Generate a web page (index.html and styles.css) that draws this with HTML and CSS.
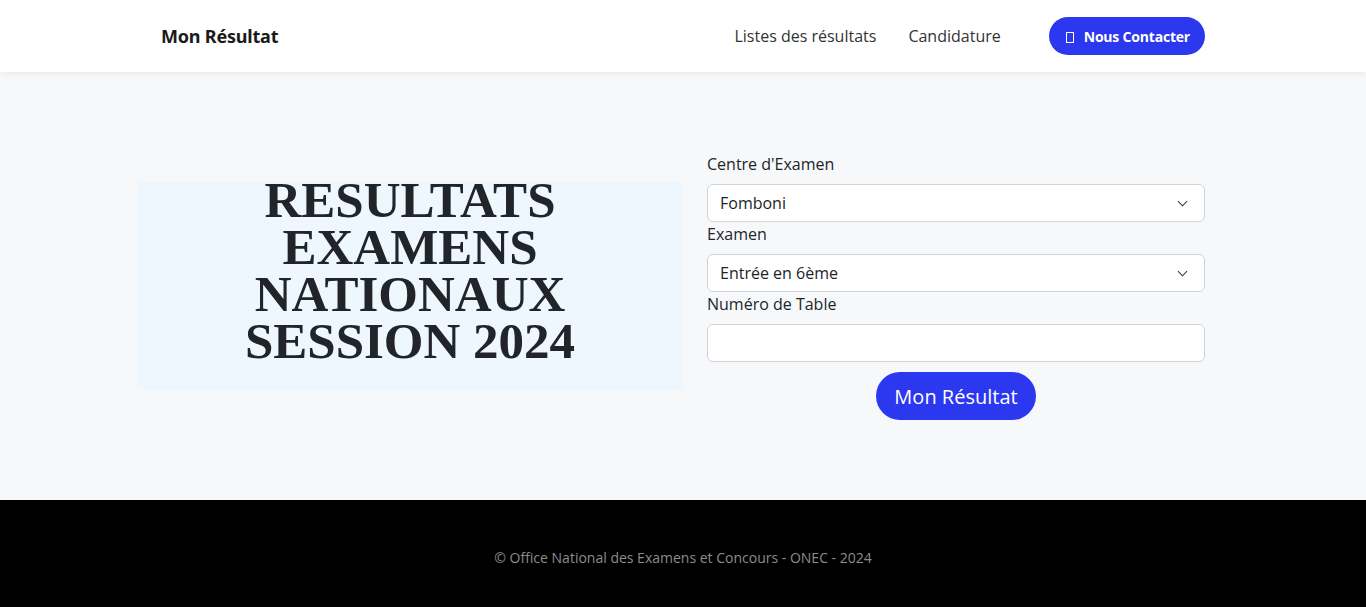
FILE: index.html
```html
<!DOCTYPE html>
<html lang="fr">
<head>
  <meta charset="UTF-8" />
  <meta name="viewport" content="width=device-width, initial-scale=1.0"/>
  <title>Mon Résultat - ONEC</title>
  <link rel="stylesheet" href="styles.css">
</head>
<body>
  <header class="navbar">
    <div class="nav-inner">
      <a href="#" class="brand">Mon Résultat</a>
      <nav class="nav-links">
        <a href="#">Listes des résultats</a>
        <a href="#">Candidature</a>
        <a href="#" class="btn-contact"><span class="tofu"></span>Nous Contacter</a>
      </nav>
    </div>
  </header>

  <main class="hero">
    <div class="row">
      <div class="titre">
        <h1>RESULTATS EXAMENS NATIONAUX SESSION 2024</h1>
      </div>

      <form class="formulaire">
        <label for="centre">Centre d'Examen</label>
        <div class="select-wrap">
          <select id="centre">
            <option>Fomboni</option>
          </select>
        </div>

        <label for="examen">Examen</label>
        <div class="select-wrap">
          <select id="examen">
            <option>Entrée en 6ème</option>
          </select>
        </div>

        <label for="numero">Numéro de Table</label>
        <input type="text" id="numero" />

        <div class="actions">
          <button type="button">Mon Résultat</button>
        </div>
      </form>
    </div>
  </main>

  <footer class="footer">
    <p>© Office National des Examens et Concours - ONEC - 2024</p>
  </footer>
</body>
</html>
```

FILE: styles.css
```css
* {
  box-sizing: border-box;
}

body {
  margin: 0;
  font-family: "Open Sans", Lato, sans-serif;
  color: #212529;
  background-color: #f7f8fa;
}

a {
  text-decoration: none;
}

.navbar {
  background-color: #fff;
  height: 72px;
  box-shadow: 0 2px 6px rgba(0, 0, 0, 0.06);
  position: relative;
}

.nav-inner {
  width: 1092px;
  margin: 0 auto;
  padding: 0 24px;
  height: 100%;
  display: flex;
  align-items: center;
  justify-content: space-between;
}

.brand {
  font-family: "Noto Sans", sans-serif;
  font-weight: 700;
  font-size: 18px;
  color: #1a1a1a;
  letter-spacing: -0.2px;
}

.nav-links {
  display: flex;
  align-items: center;
}

.nav-links a {
  color: #333;
  font-size: 16px;
  margin-left: 32px;
}

.nav-links a.btn-contact {
  margin-left: 48px;
  background-color: #2b38f0;
  color: #fff;
  font-weight: 700;
  font-size: 14px;
  letter-spacing: -0.2px;
  height: 38px;
  padding: 0 15px 0 17px;
  border-radius: 19px;
  display: flex;
  align-items: center;
}

.tofu {
  display: inline-block;
  width: 8px;
  height: 11px;
  border: 1px solid #fff;
  margin-right: 10px;
  margin-top: 3px;
}

.hero {
  padding: 80px 0;
}

.row {
  width: 1092px;
  margin: 0 auto;
  display: grid;
  grid-template-columns: 546px 546px;
  align-items: center;
}

.titre {
  background-color: #eef6fe;
  height: 208px;
  text-align: center;
}

.titre h1 {
  margin: 0 auto;
  width: 370px;
  font-family: "Liberation Serif", serif;
  font-size: 51px;
  line-height: 47px;
  font-weight: 700;
  color: #212529;
  position: relative;
  top: -5px;
}

.formulaire {
  padding: 0 24px;
  display: flex;
  flex-direction: column;
}

label {
  font-size: 16px;
  line-height: 24px;
  margin-bottom: 8px;
}

.select-wrap {
  position: relative;
}

.select-wrap::after {
  content: "";
  position: absolute;
  right: 19px;
  top: 14px;
  width: 6px;
  height: 6px;
  border-right: 1.5px solid #343a40;
  border-bottom: 1.5px solid #343a40;
  transform: rotate(45deg);
  pointer-events: none;
}

select, input[type="text"] {
  width: 100%;
  height: 38px;
  border: 1px solid #ced4da;
  border-radius: 6px;
  background-color: #fff;
  font-family: inherit;
  font-size: 16px;
  color: #212529;
  padding: 0 12px;
  appearance: none;
  -webkit-appearance: none;
}

.actions {
  text-align: center;
  margin-top: 10px;
}

.actions button {
  background-color: #2b38f0;
  color: #fff;
  border: none;
  font-family: inherit;
  font-size: 20px;
  height: 48px;
  padding: 0 18px;
  border-radius: 24px;
  cursor: pointer;
}

.footer {
  background-color: #000;
  text-align: center;
  padding: 47px 0 48px;
}

.footer p {
  margin: 0;
  color: #8c8c8c;
  font-size: 14px;
  line-height: 21px;
}
```
